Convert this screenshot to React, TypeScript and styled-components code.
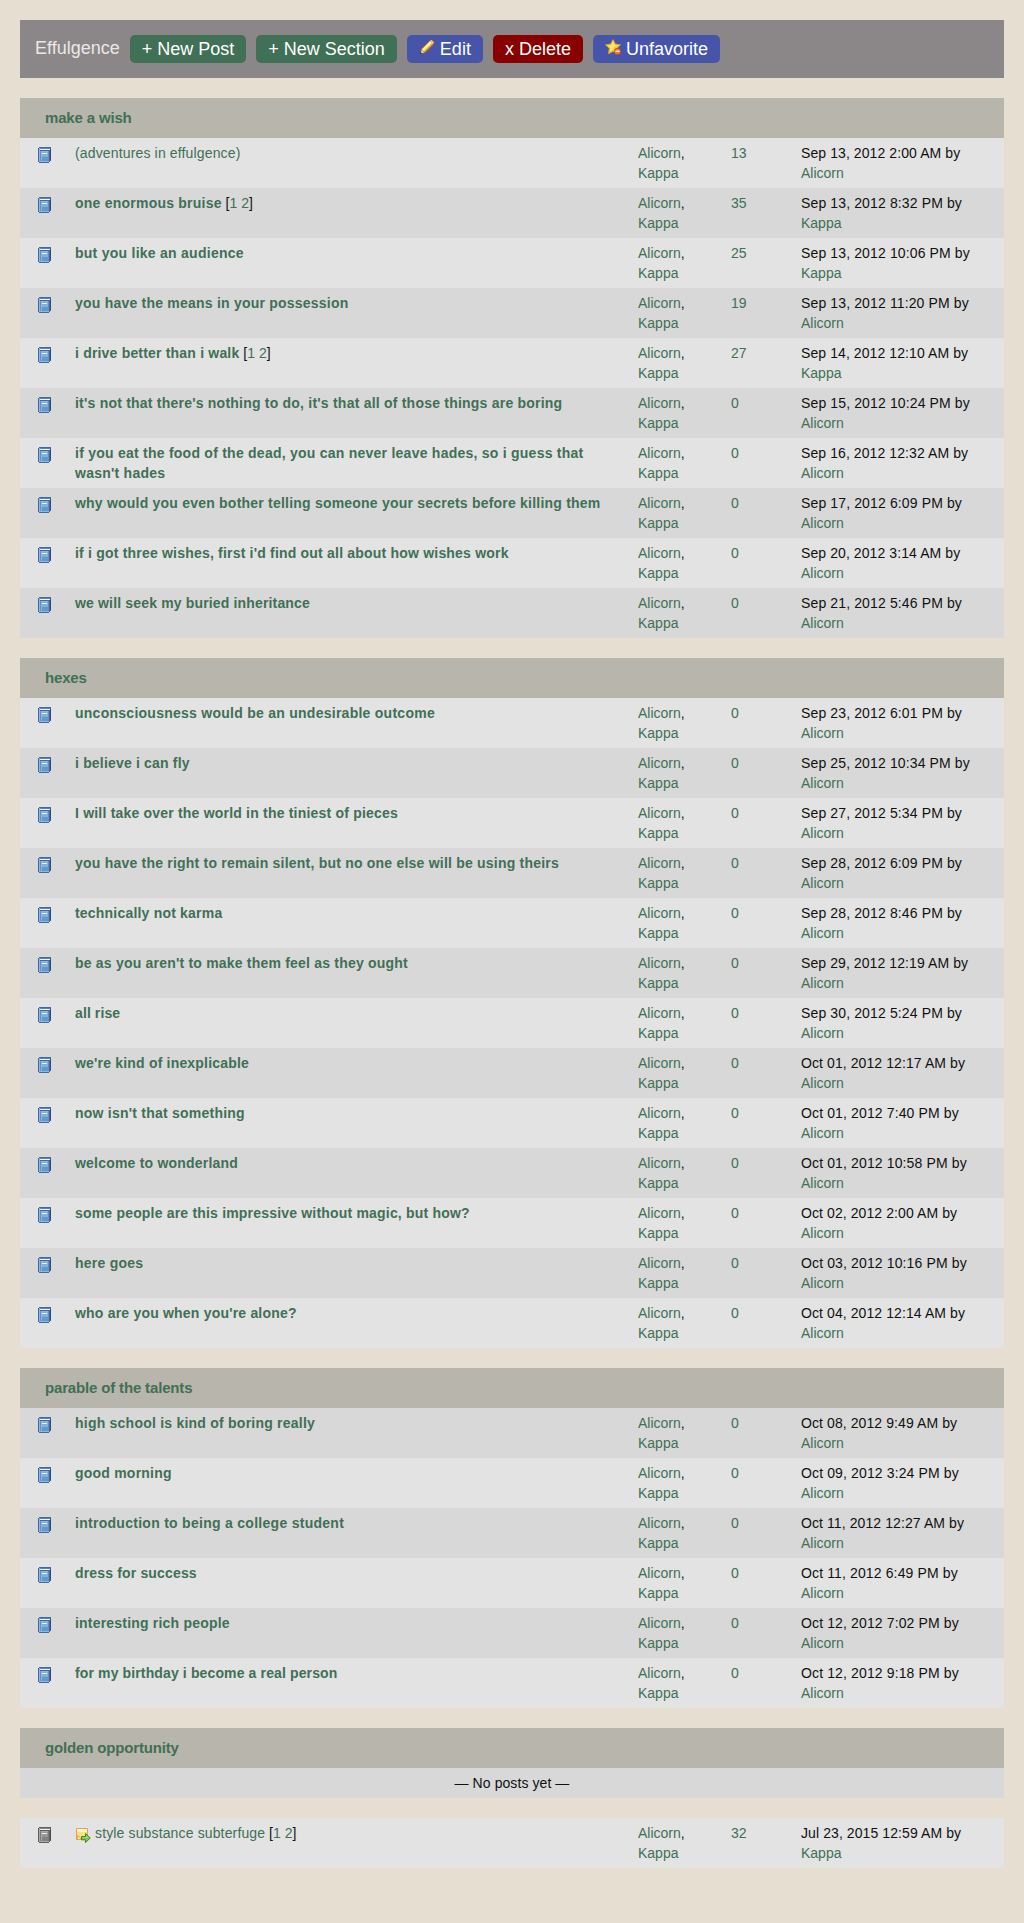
import React from 'react';
import styled, { createGlobalStyle } from 'styled-components';

const Global = createGlobalStyle`
  body {
    margin: 0;
    background: #e5ded1;
    color: #111;
    font-family: "Liberation Sans", Arial, Helvetica, sans-serif;
    font-size: 14px;
    line-height: 20px;
  }
`;

const Page = styled.main`
  display: flex;
  flex-direction: column;
  gap: 20px;
  padding: 20px 20px 55px;
  box-sizing: border-box;
`;

const Toolbar = styled.header`
  display: flex;
  align-items: center;
  gap: 10px;
  height: 58px;
  padding: 0 15px;
  box-sizing: border-box;
  background: #8b8687;
  font-size: 18px;
`;

const BoardName = styled.h1`
  margin: 0;
  padding-bottom: 2px;
  font-size: 18px;
  font-weight: 400;
  color: #e9e8e8;
`;

const Button = styled.a<{ $color: string }>`
  display: flex;
  align-items: center;
  gap: 5px;
  height: 28px;
  padding: 0 12px;
  box-sizing: border-box;
  border-radius: 5px;
  background: ${(p) => p.$color};
  color: #fff;
  white-space: nowrap;
`;

const ButtonIcon = styled.svg`
  width: 16px;
  height: 16px;
  margin-bottom: 4px;
`;

const Section = styled.section`
  display: flex;
  flex-direction: column;
`;

const SectionTitle = styled.h2`
  margin: 0;
  padding: 10px 25px;
  background: #b8b5ac;
  color: #407055;
  font-size: 15px;
  line-height: 20px;
  font-weight: 700;
  letter-spacing: -0.16px;
`;

const Row = styled.div<{ $dark: boolean }>`
  display: grid;
  grid-template-columns: 50px 563px 93px 70px 1fr;
  height: 50px;
  padding: 5px 0 5px 5px;
  box-sizing: border-box;
  background: ${(p) => (p.$dark ? '#d8d8d8' : '#e3e3e3')};
`;

const EmptyRow = styled.div<{ $dark: boolean }>`
  padding: 5px;
  text-align: center;
  letter-spacing: 0.08px;
  background: ${(p) => (p.$dark ? '#d8d8d8' : '#e3e3e3')};
`;

const StatusCell = styled.div`
  padding: 4px 0 0 11px;
`;

const StatusIcon = styled.svg`
  display: block;
  width: 16px;
  height: 16px;
`;

const TitleCell = styled.div`
  padding-right: 30px;
`;

const AuthorCell = styled.div`
  width: 60px;
`;

const Cell = styled.div``;

const DateText = styled.span<{ $tracking: number }>`
  letter-spacing: ${(p) => p.$tracking}px;
`;

const Link = styled.a`
  color: #407055;
`;

const PostLink = styled(Link)<{ $bold: boolean; $tracking: number }>`
  font-weight: ${(p) => (p.$bold ? 700 : 400)};
  letter-spacing: ${(p) => p.$tracking}px;
`;

const NoteIcon = styled.svg`
  width: 16px;
  height: 16px;
  margin-right: 4px;
  vertical-align: -5px;
`;

function Book({ read }: { read?: boolean }) {
  const c = read
    ? { edge: '#606060', top: '#858585', cover: '#979797', low: '#828282', light: '#a8a8a8', side: '#7c7c7c', dark: '#4c4c4c', page: '#f0f0f0' }
    : { edge: '#4468a0', top: '#5c82b6', cover: '#83b0d6', low: '#5f97cf', light: '#8fb6dc', side: '#6390c4', dark: '#2c4a80', page: '#f0f7ff' };
  return (
    <StatusIcon viewBox="0 0 16 16" shapeRendering="crispEdges">
      <path d="M3 0H15V14H14V15H13V16H3V15H2V1H3Z" fill={c.edge} />
      <path d="M3 1H4V15H3Z" fill={c.light} />
      <path d="M4 1H14V2H4Z" fill={c.top} />
      <path d="M4 2H14V3H4Z" fill={c.page} />
      <path d="M4 4H13V15H4Z" fill={c.side} />
      <path d="M5 4H12V14H5Z" fill={c.light} />
      <path d="M6 5H12V10H6Z" fill={c.cover} />
      <path d="M6 10H12V14H6Z" fill={c.low} />
      <path d="M6 6H11V7H6Z" fill={c.page} />
      <path d="M4 14H13V15H4Z" fill={c.light} />
      <path d="M14 2H15V13H14Z" fill={c.dark} />
    </StatusIcon>
  );
}

function Pencil() {
  return (
    <ButtonIcon viewBox="0 0 16 16">
      <path d="M1 15L2 10L11 1.2Q13 0 14.5 1.5Q16 3 15 5L6 14Z" fill="#a75c22" />
      <path d="M2.6 10.5L11 2L14 5L5.6 13.3Z" fill="#ffdf71" />
      <path d="M3.2 10.5L11 2.6L12.3 3.9L4.5 11.7Z" fill="#fff2a4" />
      <path d="M5 12.6L13 4.6L14 5.4L6 13.3Z" fill="#d79426" />
      <path d="M2.4 11L5.2 13.5L2 14.4Z" fill="#f5d8b8" />
      <path d="M1 15L1.5 12.8L3.2 14.4Z" fill="#39302d" />
      <path d="M11 2L12.4 1L15 3.6L14 5Z" fill="#f2c7a5" />
    </ButtonIcon>
  );
}

function StarRemove() {
  return (
    <ButtonIcon viewBox="0 0 16 16">
      <path d="M8 .6L10.3 5.1L15.5 5.8L11.8 9.4L12.5 14.7L8 12.4L3.5 14.7L4.3 9.4L.5 5.8L5.7 5.1Z" fill="#f3ca2b" stroke="#dba824" strokeWidth=".8" strokeLinejoin="round" />
      <path d="M8 2L9.7 5.8L13.5 6.4L9.5 7.8L8 11L4.7 12.8L5.3 9L2.5 6.4L6.2 5.9Z" fill="#ffe36a" />
      <circle cx="12.5" cy="12.4" r="3.4" fill="#d84f12" />
      <circle cx="12.5" cy="12.4" r="2.5" fill="#f07c3c" />
      <path d="M10.5 11.6H14.5V13H10.5Z" fill="#fff" />
    </ButtonIcon>
  );
}

function NoteGo() {
  return (
    <NoteIcon viewBox="0 0 16 16">
      <path d="M1.5 1.5H12.5V12.5H1.5Z" fill="#ffe07c" stroke="#e9a052" />
      <path d="M2 2H12V5H2Z" fill="#fff6d2" />
      <path d="M2 7.5L7 12H2Z" fill="#f2aa3c" />
      <path d="M3 9.5L5.6 12H3Z" fill="#fff3cb" />
      <path d="M6.5 9.5H10.5V6.5L15.3 11L10.5 15.5V12.8H6.5Z" fill="#83c45c" stroke="#3d8b20" />
      <path d="M7.5 10.5H11.2V8.8L13.7 11H7.5Z" fill="#a9da83" />
    </NoteIcon>
  );
}

interface Post {
  title: string;
  date: string;
  tracking: number;
  count?: number;
  by?: string;
  pages?: boolean;
  plain?: boolean;
  read?: boolean;
  note?: boolean;
}

const p = (title: string, date: string, tracking: number, extra: Partial<Post> = {}): Post => ({
  title,
  date,
  tracking,
  ...extra,
});

const sections: { name?: string; posts: Post[] }[] = [
  {
    name: 'make a wish',
    posts: [
      p('(adventures in effulgence)', 'Sep 13, 2012 2:00 AM', 0.15, { count: 13, plain: true }),
      p('one enormous bruise', 'Sep 13, 2012 8:32 PM', 0.23, { count: 35, by: 'Kappa', pages: true }),
      p('but you like an audience', 'Sep 13, 2012 10:06 PM', 0.26, { count: 25, by: 'Kappa' }),
      p('you have the means in your possession', 'Sep 13, 2012 11:20 PM', 0.22, { count: 19 }),
      p('i drive better than i walk', 'Sep 14, 2012 12:10 AM', 0.19, { count: 27, by: 'Kappa', pages: true }),
      p("it's not that there's nothing to do, it's that all of those things are boring", 'Sep 15, 2012 10:24 PM', 0.22),
      p("if you eat the food of the dead, you can never leave hades, so i guess that wasn't hades", 'Sep 16, 2012 12:32 AM', 0.245),
      p('why would you even bother telling someone your secrets before killing them', 'Sep 17, 2012 6:09 PM', 0.215),
      p("if i got three wishes, first i'd find out all about how wishes work", 'Sep 20, 2012 3:14 AM', 0.2),
      p('we will seek my buried inheritance', 'Sep 21, 2012 5:46 PM', 0.16),
    ],
  },
  {
    name: 'hexes',
    posts: [
      p('unconsciousness would be an undesirable outcome', 'Sep 23, 2012 6:01 PM', 0.26),
      p('i believe i can fly', 'Sep 25, 2012 10:34 PM', 0.18),
      p('I will take over the world in the tiniest of pieces', 'Sep 27, 2012 5:34 PM', 0.2),
      p('you have the right to remain silent, but no one else will be using theirs', 'Sep 28, 2012 6:09 PM', 0.215),
      p('technically not karma', 'Sep 28, 2012 8:46 PM', 0.2),
      p("be as you aren't to make them feel as they ought", 'Sep 29, 2012 12:19 AM', 0.205),
      p('all rise', 'Sep 30, 2012 5:24 PM', 0.1),
      p("we're kind of inexplicable", 'Oct 01, 2012 12:17 AM', 0.19),
      p("now isn't that something", 'Oct 01, 2012 7:40 PM', 0.23),
      p('welcome to wonderland', 'Oct 01, 2012 10:58 PM', 0.21),
      p('some people are this impressive without magic, but how?', 'Oct 02, 2012 2:00 AM', 0.19),
      p('here goes', 'Oct 03, 2012 10:16 PM', 0.25),
      p("who are you when you're alone?", 'Oct 04, 2012 12:14 AM', 0.2),
    ],
  },
  {
    name: 'parable of the talents',
    posts: [
      p('high school is kind of boring really', 'Oct 08, 2012 9:49 AM', 0.23),
      p('good morning', 'Oct 09, 2012 3:24 PM', 0.22),
      p('introduction to being a college student', 'Oct 11, 2012 12:27 AM', 0.28),
      p('dress for success', 'Oct 11, 2012 6:49 PM', 0.16),
      p('interesting rich people', 'Oct 12, 2012 7:02 PM', 0.2),
      p('for my birthday i become a real person', 'Oct 12, 2012 9:18 PM', 0.13),
    ],
  },
  { name: 'golden opportunity', posts: [] },
  {
    posts: [
      p('style substance subterfuge', 'Jul 23, 2015 12:59 AM', 0.14, {
        count: 32, by: 'Kappa', pages: true, plain: true, read: true, note: true,
      }),
    ],
  },
];

function PostRow({ post, dark }: { post: Post; dark: boolean }) {
  return (
    <Row $dark={dark}>
      <StatusCell><Book read={post.read} /></StatusCell>
      <TitleCell>
        {post.note && <NoteGo />}
        <PostLink $bold={!post.plain} $tracking={post.tracking}>{post.title}</PostLink>
        {post.pages && <> [<Link>1</Link> <Link>2</Link>]</>}
      </TitleCell>
      <AuthorCell><Link>Alicorn</Link>, <Link>Kappa</Link></AuthorCell>
      <Cell><Link>{post.count ?? 0}</Link></Cell>
      <Cell>
        <DateText $tracking={post.date.endsWith('AM') ? 0.09 : 0.13}>{post.date} by</DateText>
        <br />
        <Link>{post.by ?? 'Alicorn'}</Link>
      </Cell>
    </Row>
  );
}

export default function App() {
  // Striping carries on from one section to the next; an empty section uses one stripe.
  let stripe = 0;
  return (
    <>
      <Global />
      <Page>
        <Toolbar>
          <BoardName>Effulgence</BoardName>
          <Button $color="#407055">+ New Post</Button>
          <Button $color="#407055">+ New Section</Button>
          <Button $color="#4655aa"><Pencil />Edit</Button>
          <Button $color="#880000">x Delete</Button>
          <Button $color="#4655aa"><StarRemove />Unfavorite</Button>
        </Toolbar>
        {sections.map((s, i) => (
          <Section key={i}>
            {s.name && <SectionTitle>{s.name}</SectionTitle>}
            {s.posts.length === 0 && <EmptyRow $dark={stripe++ % 2 === 1}>— No posts yet —</EmptyRow>}
            {s.posts.map((post) => (
              <PostRow key={post.title} post={post} dark={stripe++ % 2 === 1} />
            ))}
          </Section>
        ))}
      </Page>
    </>
  );
}
